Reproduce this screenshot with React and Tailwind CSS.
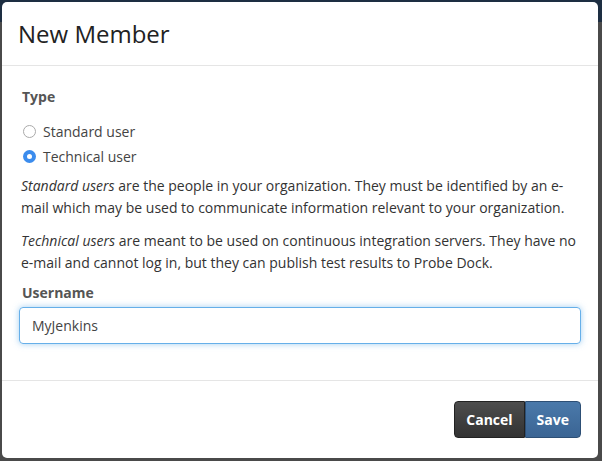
import React, { useState } from "react";

export default function App() {
  const [type, setType] = useState("technical");
  const [name, setName] = useState("MyJenkins");

  return (
    <div className="relative h-[461px] w-[602px] overflow-hidden bg-[#4a4a4a] font-['Open_Sans',sans-serif] text-[#333]">
      <div className="absolute inset-x-0 top-0 h-[22px] bg-[#1d2e42]" />
      <div className="relative mx-[2px] mt-[2px] flex h-[456px] w-[596px] flex-col rounded-[5px] bg-white">
        <div className="flex h-[64px] items-center border-b border-[#e5e5e5] px-[16px]">
          <h4 className="text-[24px] leading-none text-[#222]">New Member</h4>
        </div>

        <div className="flex-1 px-[17px] pt-[20px]">
          <p className="pl-[3px] text-[14px] font-bold text-[#555]">Type</p>

          <div className="mt-[14px] flex flex-col gap-[5px] text-[14px] text-[#444]">
            {[
              ["standard", "Standard user"],
              ["technical", "Technical user"],
            ].map(([key, label]) => (
              <label key={key} className="flex h-[20px] items-center gap-[7px] pl-[4px]" onClick={() => setType(key)}>
                {type === key ? (
                  <span className="flex h-[13px] w-[13px] items-center justify-center rounded-full bg-[#3b8ced]">
                    <span className="h-[5px] w-[5px] rounded-full bg-white" />
                  </span>
                ) : (
                  <span className="h-[13px] w-[13px] rounded-full border border-[#aaa] bg-white" />
                )}
                {label}
              </label>
            ))}
          </div>

          <p className="mt-[9px] pl-[2px] text-[14px] leading-[22px] text-[#333]">
            <em>Standard users</em> are the people in your organization. They must be identified by an e-mail which may be used to communicate information relevant to your organization.
          </p>
          <p className="mt-[11px] pl-[2px] text-[14px] leading-[22px] text-[#333]">
            <em>Technical users</em> are meant to be used on continuous integration servers. They have no e-mail and cannot log in, but they can publish test results to Probe Dock.
          </p>

          <p className="mt-[8px] pl-[3px] text-[14px] font-bold text-[#555]">Username</p>
          <input
            className="mt-[4px] h-[37px] w-full rounded-[4px] border border-[#66afe9] px-[12px] text-[14px] text-[#444] shadow-[0_0_6px_rgba(102,175,233,0.6)] outline-none"
            value={name}
            onChange={(e) => setName(e.target.value)}
          />
        </div>

        <div className="flex h-[78px] items-center justify-end border-t border-[#e5e5e5] px-[17px]">
          <div className="flex">
            <button className="h-[37px] rounded-l-[4px] border border-[#222] bg-gradient-to-b from-[#4d4d4d] to-[#333] px-[11px] text-[14px] font-bold text-white">
              Cancel
            </button>
            <button className="h-[37px] rounded-r-[4px] border border-[#2d4f75] bg-gradient-to-b from-[#4a79aa] to-[#3b6594] px-[11px] text-[14px] font-bold text-white">
              Save
            </button>
          </div>
        </div>
      </div>
    </div>
  );
}
